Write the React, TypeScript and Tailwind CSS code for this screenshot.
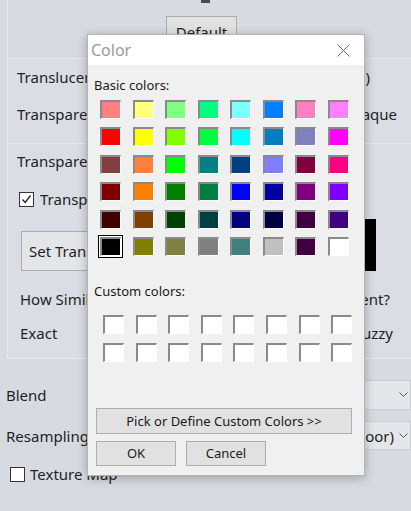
const basic = [
  ["#ff8080", "#ffff80", "#80ff80", "#00ff80", "#80ffff", "#0080ff", "#ff80c0", "#ff80ff"],
  ["#ff0000", "#ffff00", "#80ff00", "#00ff40", "#00ffff", "#0080c0", "#8080c0", "#ff00ff"],
  ["#804040", "#ff8040", "#00ff00", "#008080", "#004080", "#8080ff", "#800040", "#ff0080"],
  ["#800000", "#ff8000", "#008000", "#008040", "#0000ff", "#0000a0", "#800080", "#8000ff"],
  ["#400000", "#804000", "#004000", "#004040", "#000080", "#000040", "#400040", "#400080"],
  ["#000000", "#808000", "#808040", "#808080", "#408080", "#c0c0c0", "#400040", "#ffffff"],
];

function Chevron() {
  return (
    <svg width="9" height="6" viewBox="0 0 9 6" className="shrink-0">
      <polyline points="0.5,0.5 4.5,4.5 8.5,0.5" fill="none" stroke="#555" strokeWidth="1" />
    </svg>
  );
}

function Swatch({ color, selected }: { color: string; selected?: boolean }) {
  return (
    <div className="relative h-[19px] w-[21px]">
      {selected ? <div className="absolute -inset-[2px] border border-black bg-white" /> : null}
      <div
        className="relative h-full w-full border-t-2 border-l-2 border-b border-r border-t-[#8a8a8a] border-l-[#8a8a8a] border-b-white border-r-white"
        style={{ backgroundColor: color }}
      />
    </div>
  );
}

function WinButton({ children, className }: { children: React.ReactNode; className: string }) {
  return (
    <div className={`flex items-center justify-center border border-[#adadad] bg-[#e1e1e1] text-[13px] text-[#1a1a1a] ${className}`}>
      {children}
    </div>
  );
}

// text that disappears under the dialog: clipped at the dialog's edge
function Clip({ text, w }: { text: string; w: string }) {
  return <span className={`overflow-hidden whitespace-nowrap ${w}`}>{text}</span>;
}

function ColorDialog() {
  return (
    <div className="absolute left-[87px] top-[34px] flex h-[442px] w-[278px] flex-col border border-[#b4b4b4] bg-[#f0f0f0] shadow-[0_2px_10px_rgba(0,0,0,0.28)]">
      <div className="flex h-[30px] shrink-0 items-center justify-between bg-white pl-[3px] pr-[14px]">
        <span className="text-[16px] text-[#9a9a9a]">Color</span>
        <svg width="13" height="13" viewBox="0 0 13 13">
          <path d="M0.5 0.5 L12.5 12.5 M12.5 0.5 L0.5 12.5" stroke="#6a6a6a" strokeWidth="1" />
        </svg>
      </div>
      <div className="flex flex-col pl-[6px]">
        <div className="mt-[12px] text-[13px] leading-[16px] text-[#1a1a1a]">Basic colors:</div>
        <div className="ml-[6px] mt-[7px] grid grid-cols-[repeat(8,21px)] gap-x-[11.5px] gap-y-[8.4px]">
          {basic.map((row, r) =>
            row.map((c, i) => <Swatch key={`${r}-${i}`} color={c} selected={r === 5 && i === 0} />)
          )}
        </div>
        <div className="mt-[27px] text-[13px] leading-[16px] text-[#1a1a1a]">Custom colors:</div>
        <div className="ml-[9px] mt-[16px] grid grid-cols-[repeat(8,21px)] gap-x-[11.6px] gap-y-[9px]">
          {Array.from({ length: 16 }).map((_, i) => (
            <Swatch key={i} color="#ffffff" />
          ))}
        </div>
        <WinButton className="ml-[2px] mt-[46px] h-[26px] w-[256px]">Pick or Define Custom Colors &gt;&gt;</WinButton>
        <div className="ml-[2px] mt-[7px] flex gap-[10px]">
          <WinButton className="h-[25px] w-[80px]">OK</WinButton>
          <WinButton className="h-[25px] w-[80px]">Cancel</WinButton>
        </div>
      </div>
    </div>
  );
}

function Check({ checked }: { checked?: boolean }) {
  return (
    <div className="flex h-[15px] w-[15px] shrink-0 items-center justify-center border border-[#333] bg-white">
      {checked ? (
        <svg width="11" height="11" viewBox="0 0 11 11">
          <polyline points="1.5,5.5 4.2,8.5 9.5,1.5" fill="none" stroke="#222" strokeWidth="1.4" />
        </svg>
      ) : null}
    </div>
  );
}

export default function App() {
  return (
    <div className="relative h-[511px] w-[411px] overflow-hidden bg-[#d7dbe1] font-['Noto_Sans',sans-serif] text-[15px] leading-[20px] text-[#1f1f1f]">
      {/* top group */}
      <div className="ml-[7px] flex h-[59px] flex-col border-b border-l border-[#e6e8ec]">
        <div className="ml-[193px] h-[3px] w-[9px] bg-[#4a4a4a]" />
        <div className="ml-[158px] mt-[13px] flex h-[32px] w-[71px] items-center justify-center border border-[#adadad] bg-[#e1e1e1]">
          Default
        </div>
      </div>

      {/* translucency group */}
      <div className="ml-[7px] flex flex-col border-b border-l border-[#e6e8ec] bg-[#dadde3] pb-[19px] pl-[9px]">
        <div className="mt-[8px] flex justify-between pr-[41px]">
          <Clip text="Translucency" w="w-[71px]" />
          <span>)</span>
        </div>
        <div className="mt-[17px] flex justify-between pr-[14px]">
          <Clip text="Transparent" w="w-[71px]" />
          <span>aque</span>
        </div>
      </div>

      {/* transparent colour group */}
      <div className="ml-[7px] flex flex-col border-b border-l border-[#e6e8ec] bg-[#dadde3] pb-[15px]">
        <div className="ml-[9px] mt-[7px] flex">
          <Clip text="Transparent Color" w="w-[71px]" />
        </div>
        <div className="ml-[11px] mt-[18px] flex items-center gap-[6px]">
          <Check checked />
          <Clip text="Transparent" w="w-[48px]" />
        </div>
        <div className="mt-[10px] flex items-end justify-between pr-[35px]">
          <div className="ml-[13px] flex h-[40px] w-[67px] items-center overflow-hidden whitespace-nowrap border-y border-l border-[#adadad] bg-[#e3e5e8] pl-[7px]">
            Set Transparent Color
          </div>
          <div className="h-[52px] w-[11px] bg-black" />
        </div>
        <div className="mt-[18px] flex justify-between pl-[12px] pr-[21px]">
          <Clip text="How Similar" w="w-[68px]" />
          <span>ent?</span>
        </div>
        <div className="mt-[14px] flex justify-between pl-[12px] pr-[18px]">
          <span>Exact</span>
          <span>uzzy</span>
        </div>
      </div>

      {/* blend */}
      <div className="mt-[21px] flex h-[30px] items-center pl-[6px]">
        <span>Blend</span>
        <div className="ml-auto flex h-[30px] w-[47px] items-center justify-end border-y border-r border-[#c9cdd3] bg-[#e4e6ea] pr-[2px]">
          <Chevron />
        </div>
      </div>

      {/* resampling */}
      <div className="mt-[11px] flex h-[29px] items-center pl-[6px]">
        <Clip text="Resampling" w="w-[81px]" />
        <div className="ml-auto flex h-[29px] w-[47px] items-center justify-end gap-[5px] border-y border-r border-[#c9cdd3] bg-[#e4e6ea] pr-[2px]">
          <span>oor)</span>
          <Chevron />
        </div>
      </div>

      {/* texture map */}
      <div className="ml-[10px] mt-[14px] flex items-center gap-[5px]">
        <Check />
        <span>Texture Map</span>
      </div>

      <ColorDialog />
    </div>
  );
}
